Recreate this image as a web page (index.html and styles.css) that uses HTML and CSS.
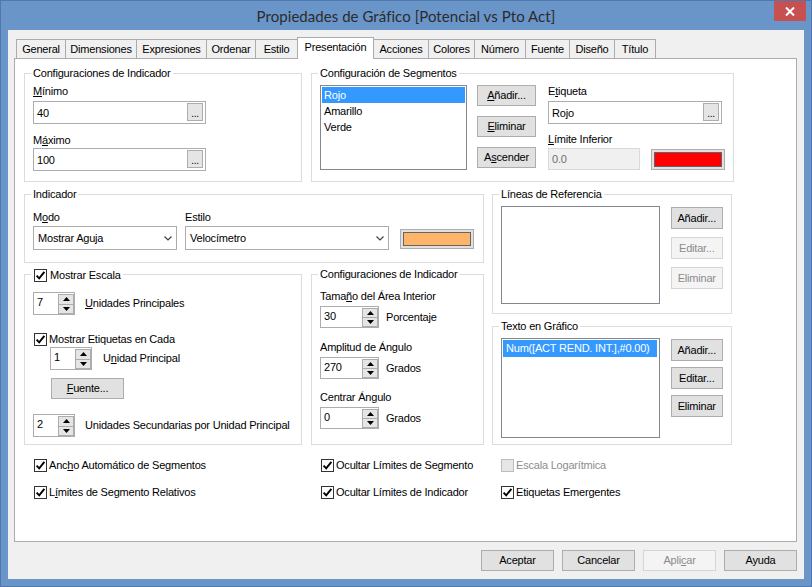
FILE: index.html
```html
<!DOCTYPE html>
<html lang="es">
<head>
<meta charset="utf-8">
<title>Propiedades de Gráfico</title>
<link rel="stylesheet" href="styles.css">
</head>
<body>
<div class="window">
  <div class="titlebar">
    <span class="title">Propiedades de Gráfico [Potencial vs Pto Act]</span>
    <div class="close"><svg width="10" height="9" viewBox="0 0 10 9"><path d="M1 0.5 L9 8.5 M9 0.5 L1 8.5" stroke="#fff" stroke-width="2"/></svg></div>
  </div>
  <div class="client">
    <div class="tabs">
      <div class="tab t1">General</div>
      <div class="tab t2">Dimensiones</div>
      <div class="tab t3">Expresiones</div>
      <div class="tab t4">Ordenar</div>
      <div class="tab t5">Estilo</div>
      <div class="tab t6 selected">Presentación</div>
      <div class="tab t7">Acciones</div>
      <div class="tab t8">Colores</div>
      <div class="tab t9">Número</div>
      <div class="tab t10">Fuente</div>
      <div class="tab t11">Diseño</div>
      <div class="tab t12">Título</div>
    </div>
    <div class="panel">
      <div class="top-row">
        <div class="group g1">
          <div class="gtitle"><span>Configuraciones de Indicador</span></div>
          <div class="lbl l-min"><u>M</u>ínimo</div>
          <div class="textbox tb-min"><span>40</span><div class="dots">...</div></div>
          <div class="lbl l-max">M<u>á</u>ximo</div>
          <div class="textbox tb-max"><span>100</span><div class="dots">...</div></div>
        </div>
        <div class="group g2">
          <div class="gtitle"><span>Configuración de Segmentos</span></div>
          <div class="seg-row">
            <div class="listbox seg-list">
              <div class="item sel">Rojo</div>
              <div class="item">Amarillo</div>
              <div class="item">Verde</div>
            </div>
            <div class="btn-col seg-btns">
              <div class="btn"><u>A</u>ñadir...</div>
              <div class="btn"><u>E</u>liminar</div>
              <div class="btn">A<u>s</u>cender</div>
            </div>
            <div class="seg-right">
              <div class="lbl">E<u>t</u>iqueta</div>
              <div class="textbox tb-etq"><span>Rojo</span><div class="dots">...</div></div>
              <div class="lbl l-lim"><u>L</u>ímite Inferior</div>
              <div class="lim-row">
                <div class="textbox disabled tb-lim"><span>0.0</span></div>
                <div class="colorbtn cb-red"><div class="swatch red"></div></div>
              </div>
            </div>
          </div>
        </div>
      </div>
      <div class="mid-row">
        <div class="left-col">
          <div class="group g3">
            <div class="gtitle"><span>Indicador</span></div>
            <div class="ind-row">
              <div class="field f-modo">
                <div class="lbl">M<u>o</u>do</div>
                <div class="combo"><span>Mostrar Aguja</span><svg width="8" height="5" viewBox="0 0 8 5"><polyline points="0.5,0.5 4,4 7.5,0.5" fill="none" stroke="#404040" stroke-width="1.2"/></svg></div>
              </div>
              <div class="field f-estilo">
                <div class="lbl">Estilo</div>
                <div class="combo"><span>Velocímetro</span><svg width="8" height="5" viewBox="0 0 8 5"><polyline points="0.5,0.5 4,4 7.5,0.5" fill="none" stroke="#404040" stroke-width="1.2"/></svg></div>
              </div>
              <div class="colorbtn cb-orange"><div class="swatch orange"></div></div>
            </div>
          </div>
          <div class="sub-row">
            <div class="group g5">
              <div class="gtitle gtitle-cb"><span><i class="cb checked"><svg width="11" height="11" viewBox="0 0 11 11"><path d="M1.6 5.6 L4.2 8.4 L9.4 1.8" fill="none" stroke="#000" stroke-width="1.9"/></svg></i>Mostrar Escala</span></div>
              <div class="spin-row r1">
                <div class="spin s-small"><span class="val">7</span><div class="arrows"><div class="arr"><svg width="7" height="4" viewBox="0 0 7 4"><path d="M0 4 L3.5 0 L7 4Z"/></svg></div><div class="arr"><svg width="7" height="4" viewBox="0 0 7 4"><path d="M0 0 L3.5 4 L7 0Z"/></svg></div></div></div>
                <span class="spin-lbl"><u>U</u>nidades Principales</span>
              </div>
              <div class="check c-etq"><i class="cb checked"><svg width="11" height="11" viewBox="0 0 11 11"><path d="M1.6 5.6 L4.2 8.4 L9.4 1.8" fill="none" stroke="#000" stroke-width="1.9"/></svg></i><span>Mostrar Etiquetas en Cada</span></div>
              <div class="spin-row r2">
                <div class="spin s-small"><span class="val">1</span><div class="arrows"><div class="arr"><svg width="7" height="4" viewBox="0 0 7 4"><path d="M0 4 L3.5 0 L7 4Z"/></svg></div><div class="arr"><svg width="7" height="4" viewBox="0 0 7 4"><path d="M0 0 L3.5 4 L7 0Z"/></svg></div></div></div>
                <span class="spin-lbl">U<u>n</u>idad Principal</span>
              </div>
              <div class="btn fuente"><u>F</u>uente...</div>
              <div class="spin-row r3">
                <div class="spin s-small"><span class="val">2</span><div class="arrows"><div class="arr"><svg width="7" height="4" viewBox="0 0 7 4"><path d="M0 4 L3.5 0 L7 4Z"/></svg></div><div class="arr"><svg width="7" height="4" viewBox="0 0 7 4"><path d="M0 0 L3.5 4 L7 0Z"/></svg></div></div></div>
                <span class="spin-lbl">Unidades Secundarias por Unidad Principal</span>
              </div>
            </div>
            <div class="group g6">
              <div class="gtitle"><span>Configuraciones de Indicador</span></div>
              <div class="lbl l-a">Tama<u>ñ</u>o del Área Interior</div>
              <div class="spin-row r-a">
                <div class="spin s-wide"><span class="val">30</span><div class="arrows"><div class="arr"><svg width="7" height="4" viewBox="0 0 7 4"><path d="M0 4 L3.5 0 L7 4Z"/></svg></div><div class="arr"><svg width="7" height="4" viewBox="0 0 7 4"><path d="M0 0 L3.5 4 L7 0Z"/></svg></div></div></div>
                <span class="spin-lbl">Porcentaje</span>
              </div>
              <div class="lbl l-b">Amplitud de Ángulo</div>
              <div class="spin-row r-a">
                <div class="spin s-wide"><span class="val">270</span><div class="arrows"><div class="arr"><svg width="7" height="4" viewBox="0 0 7 4"><path d="M0 4 L3.5 0 L7 4Z"/></svg></div><div class="arr"><svg width="7" height="4" viewBox="0 0 7 4"><path d="M0 0 L3.5 4 L7 0Z"/></svg></div></div></div>
                <span class="spin-lbl">Grados</span>
              </div>
              <div class="lbl l-c">Centrar Án<u>g</u>ulo</div>
              <div class="spin-row r-a">
                <div class="spin s-wide"><span class="val">0</span><div class="arrows"><div class="arr"><svg width="7" height="4" viewBox="0 0 7 4"><path d="M0 4 L3.5 0 L7 4Z"/></svg></div><div class="arr"><svg width="7" height="4" viewBox="0 0 7 4"><path d="M0 0 L3.5 4 L7 0Z"/></svg></div></div></div>
                <span class="spin-lbl">Grados</span>
              </div>
            </div>
          </div>
        </div>
        <div class="right-col">
          <div class="group g4">
            <div class="gtitle"><span>Líneas de Referencia</span></div>
            <div class="ref-row">
              <div class="listbox ref-list"></div>
              <div class="btn-col ref-btns">
                <div class="btn">Añadir...</div>
                <div class="btn disabled">Editar...</div>
                <div class="btn disabled">Eliminar</div>
              </div>
            </div>
          </div>
          <div class="group g7">
            <div class="gtitle"><span>Texto en Gráfico</span></div>
            <div class="ref-row">
              <div class="listbox txt-list">
                <div class="item sel txt-item">Num([ACT REND. INT.],#0.00)</div>
              </div>
              <div class="btn-col txt-btns">
                <div class="btn">Añadir...</div>
                <div class="btn">Editar...</div>
                <div class="btn">Eliminar</div>
              </div>
            </div>
          </div>
        </div>
      </div>
      <div class="checks">
        <div class="check"><i class="cb checked"><svg width="11" height="11" viewBox="0 0 11 11"><path d="M1.6 5.6 L4.2 8.4 L9.4 1.8" fill="none" stroke="#000" stroke-width="1.9"/></svg></i><span>Anc<u>h</u>o Automático de Segmentos</span></div>
        <div class="check"><i class="cb checked"><svg width="11" height="11" viewBox="0 0 11 11"><path d="M1.6 5.6 L4.2 8.4 L9.4 1.8" fill="none" stroke="#000" stroke-width="1.9"/></svg></i><span>Ocultar Límites de Segmento</span></div>
        <div class="check disabled"><i class="cb"></i><span>Escala Logarítmica</span></div>
        <div class="check"><i class="cb checked"><svg width="11" height="11" viewBox="0 0 11 11"><path d="M1.6 5.6 L4.2 8.4 L9.4 1.8" fill="none" stroke="#000" stroke-width="1.9"/></svg></i><span>L<u>í</u>mites de Segmento Relativos</span></div>
        <div class="check"><i class="cb checked"><svg width="11" height="11" viewBox="0 0 11 11"><path d="M1.6 5.6 L4.2 8.4 L9.4 1.8" fill="none" stroke="#000" stroke-width="1.9"/></svg></i><span>Ocultar Límites de Indicador</span></div>
        <div class="check"><i class="cb checked"><svg width="11" height="11" viewBox="0 0 11 11"><path d="M1.6 5.6 L4.2 8.4 L9.4 1.8" fill="none" stroke="#000" stroke-width="1.9"/></svg></i><span>Etiquetas Emergentes</span></div>
      </div>
    </div>
    <div class="footer">
      <div class="btn fbtn">Aceptar</div>
      <div class="btn fbtn">Cancelar</div>
      <div class="btn fbtn disabled">Apli<u>c</u>ar</div>
      <div class="btn fbtn">Ayuda</div>
    </div>
  </div>
</div>
</body>
</html>
```
FILE: styles.css
```css
* { box-sizing: border-box; }
html, body { margin: 0; padding: 0; }
body {
  width: 812px;
  height: 587px;
  overflow: hidden;
  font-family: "Liberation Sans", Arial, sans-serif;
  font-size: 11px;
  letter-spacing: -0.2px;
  color: #000;
  background: #6a95c9;
}
u { text-decoration: underline; text-underline-offset: 1px; }
i { font-style: normal; }

.window {
  width: 812px;
  height: 587px;
  background: #6a95c9;
  border: 1px solid #4f79ae;
  padding: 0 7px 7px 7px;
  display: flex;
  flex-direction: column;
}

.titlebar {
  position: relative;
  height: 29px;
  margin: 0 -7px;
  display: flex;
  align-items: center;
  justify-content: center;
}
.title {
  font-family: Lato, "Liberation Sans", sans-serif;
  font-size: 15px;
  letter-spacing: 0.05px;
  color: #2b2b2b;
  padding-top: 1px;
}
.close {
  position: absolute;
  top: 0;
  right: 5px;
  width: 32px;
  height: 20px;
  background: #c75050;
  display: flex;
  align-items: center;
  justify-content: center;
}

.client {
  flex: 1;
  background: #f0f0f0;
  padding: 7px 7px 0 6px;
}

.tabs {
  display: flex;
  align-items: flex-end;
  height: 21px;
  padding-left: 2px;
}
.tab {
  height: 19px;
  border: 1px solid #acacac;
  border-bottom: none;
  background: #f0f0f0;
  margin-left: -1px;
  display: flex;
  align-items: center;
  justify-content: center;
  line-height: 13px;
}
.tab.t1 { margin-left: 0; width: 50px; }
.tab.t2 { width: 72px; }
.tab.t3 { width: 71px; }
.tab.t4 { width: 50px; }
.tab.t5 { width: 43px; }
.tab.t6 { width: 77px; }
.tab.t7 { width: 56px; }
.tab.t8 { width: 47px; }
.tab.t9 { width: 52px; }
.tab.t10 { width: 45px; }
.tab.t11 { width: 46px; }
.tab.t12 { width: 42px; }
.tab.selected {
  position: relative;
  z-index: 1;
  height: 22px;
  margin-bottom: -1px;
  background: #fff;
  padding-bottom: 3px;
}

.panel {
  width: 783px;
  height: 484px;
  border: 1px solid #acacac;
  background: #fff;
}

.top-row {
  display: flex;
  gap: 9px;
  margin: 14px 0 0 9px;
}
.mid-row {
  display: flex;
  gap: 8px;
  margin: 12px 0 0 9px;
}
.left-col {
  width: 460px;
  display: flex;
  flex-direction: column;
  gap: 11px;
}
.right-col {
  width: 240px;
  display: flex;
  flex-direction: column;
  gap: 12px;
}
.sub-row {
  display: flex;
  gap: 9px;
}

.group {
  border: 1px solid #dcdcdc;
  padding: 0 8px;
}
.gtitle {
  display: flex;
  margin: -7px 0 0 -2px;
  line-height: 13px;
  height: 13px;
}
.gtitle span {
  background: #fff;
  padding: 0 2px;
  display: flex;
  align-items: center;
}
.gtitle-cb { margin-top: -6px; }
.gtitle-cb .cb { margin: 0 3px 0 1px; }

.g1 { width: 278px; height: 109px; }
.g2 { width: 423px; height: 109px; }
.g3 { width: 460px; height: 69px; }
.g4 { width: 240px; height: 120px; }
.g5 { width: 278px; height: 171px; }
.g6 { width: 173px; height: 171px; }
.g7 { width: 240px; height: 119px; }

.lbl { line-height: 13px; height: 13px; white-space: nowrap; }
.l-min { margin-top: 5px; }
.tb-min { margin-top: 3px; }
.l-max { margin-top: 10px; }
.tb-max { margin-top: 1px; }

.textbox {
  height: 23px;
  width: 173px;
  border: 1px solid #abadb3;
  background: #fff;
  display: flex;
  align-items: center;
  padding-left: 3px;
}
.textbox > span { flex: 1; }
.textbox.disabled {
  background: #f0f0f0;
  border-color: #d9d9d9;
  color: #6d6d6d;
}
.dots {
  align-self: flex-start;
  width: 16px;
  height: 18px;
  margin: 1px 2px 0 0;
  border: 1px solid #adadad;
  background: #e5e5e5;
  display: flex;
  align-items: flex-end;
  justify-content: center;
  line-height: 11px;
  font-size: 10px;
  padding-bottom: 1px;
}

.btn {
  height: 21px;
  border: 1px solid #adadad;
  background: #e1e1e1;
  display: flex;
  align-items: center;
  justify-content: center;
  white-space: nowrap;
  line-height: 13px;
}
.btn.disabled {
  background: #f4f4f4;
  border-color: #d5d5d5;
  color: #8b8b8b;
}
.btn-col { display: flex; flex-direction: column; }

.seg-row { display: flex; margin-top: 5px; }
.listbox {
  border: 1px solid #828790;
  background: #fff;
  padding: 1px;
}
.seg-list { width: 147px; height: 85px; }
.item {
  height: 16px;
  line-height: 16px;
  padding-left: 2px;
  white-space: nowrap;
}
.item.sel { background: #3399ff; color: #fff; }
.seg-btns { margin-left: 10px; gap: 10px; width: 59px; }
.seg-right { margin-left: 12px; }
.tb-etq { margin-top: 3px; width: 174px; }
.l-lim { margin-top: 9px; }
.lim-row { display: flex; margin-top: 2px; }
.tb-lim { width: 92px; height: 22px; }

.colorbtn {
  width: 74px;
  height: 21px;
  border: 1px solid #adadad;
  background: #e1e1e1;
  padding: 2px;
}
.swatch {
  width: 100%;
  height: 100%;
  border: 1px solid #646464;
}
.swatch.red { background: #ff0000; }
.swatch.orange { background: #ffb469; }
.cb-red { margin: 1px 0 0 11px; height: 21px; }

.ind-row { display: flex; margin-top: 10px; }
.field .combo { margin-top: 2px; }
.f-modo { width: 144px; }
.f-estilo { width: 204px; margin-left: 8px; }
.cb-orange { margin: 18px 0 0 11px; height: 20px; }
.combo {
  height: 24px;
  border: 1px solid #acacac;
  background: #fff;
  display: flex;
  align-items: center;
  justify-content: space-between;
  padding: 0 4px 0 4px;
  white-space: nowrap;
}

.ref-row { display: flex; margin-top: 5px; }
.ref-list { width: 160px; height: 98px; }
.ref-btns { margin: 1px 0 0 11px; width: 53px; gap: 8px; }
.ref-btns .btn, .txt-btns .btn { height: 22px; }
.txt-list { width: 160px; height: 100px; }
.txt-item { width: 154px; height: 17px; line-height: 17px; padding-left: 3px; }
.txt-btns { margin: 1px 0 0 11px; width: 53px; gap: 6px; }

.cb {
  width: 13px;
  height: 13px;
  border: 1px solid #333;
  background: #fff;
  display: inline-flex;
  align-items: center;
  justify-content: center;
  flex: none;
}
.check {
  display: flex;
  align-items: center;
  gap: 2px;
  line-height: 13px;
  height: 13px;
  white-space: nowrap;
}
.check.disabled { color: #8d8d8d; }
.check.disabled .cb { border-color: #bcbcbc; background: #e6e6e6; }

.spin-row { display: flex; align-items: center; }
.spin {
  display: flex;
  height: 23px;
  border: 1px solid #abadb3;
  background: #fff;
  flex: none;
}
.spin .val {
  flex: 1;
  padding: 3px 0 0 3px;
  line-height: 13px;
}
.spin .arrows {
  width: 16px;
  display: flex;
  flex-direction: column;
  padding-top: 1px;
}
.arr {
  flex: 1;
  border: 1px solid #acacac;
  background: #e5e5e5;
  display: flex;
  align-items: center;
  justify-content: center;
}
.arr + .arr { border-top: none; }
.arr svg path { fill: #000; }
.s-small { width: 42px; }
.s-wide { width: 59px; height: 22px; }
.spin-lbl { white-space: nowrap; line-height: 13px; }

.r1 { margin-top: 10px; }
.r1 .spin-lbl, .r3 .spin-lbl { margin-left: 10px; }
.c-etq { margin: 18px 0 0 1px; }
.r2 { margin: 1px 0 0 17px; }
.r2 .spin-lbl { margin-left: 11px; }
.fuente { width: 73px; margin: 8px 0 0 18px; }
.r3 { margin-top: 15px; }

.l-a { margin-top: 9px; }
.r-a { margin-top: 3px; }
.r-a .spin-lbl { margin-left: 7px; }
.l-b { margin-top: 13px; }
.l-c { margin-top: 12px; }

.checks {
  display: grid;
  grid-template-columns: 287px 180px auto;
  grid-auto-rows: 13px;
  row-gap: 14px;
  margin-top: 14px;
  padding-left: 19px;
}

.footer {
  display: flex;
  justify-content: flex-end;
  gap: 8px;
  padding-top: 8px;
}
.fbtn { width: 73px; height: 21px; }
```
